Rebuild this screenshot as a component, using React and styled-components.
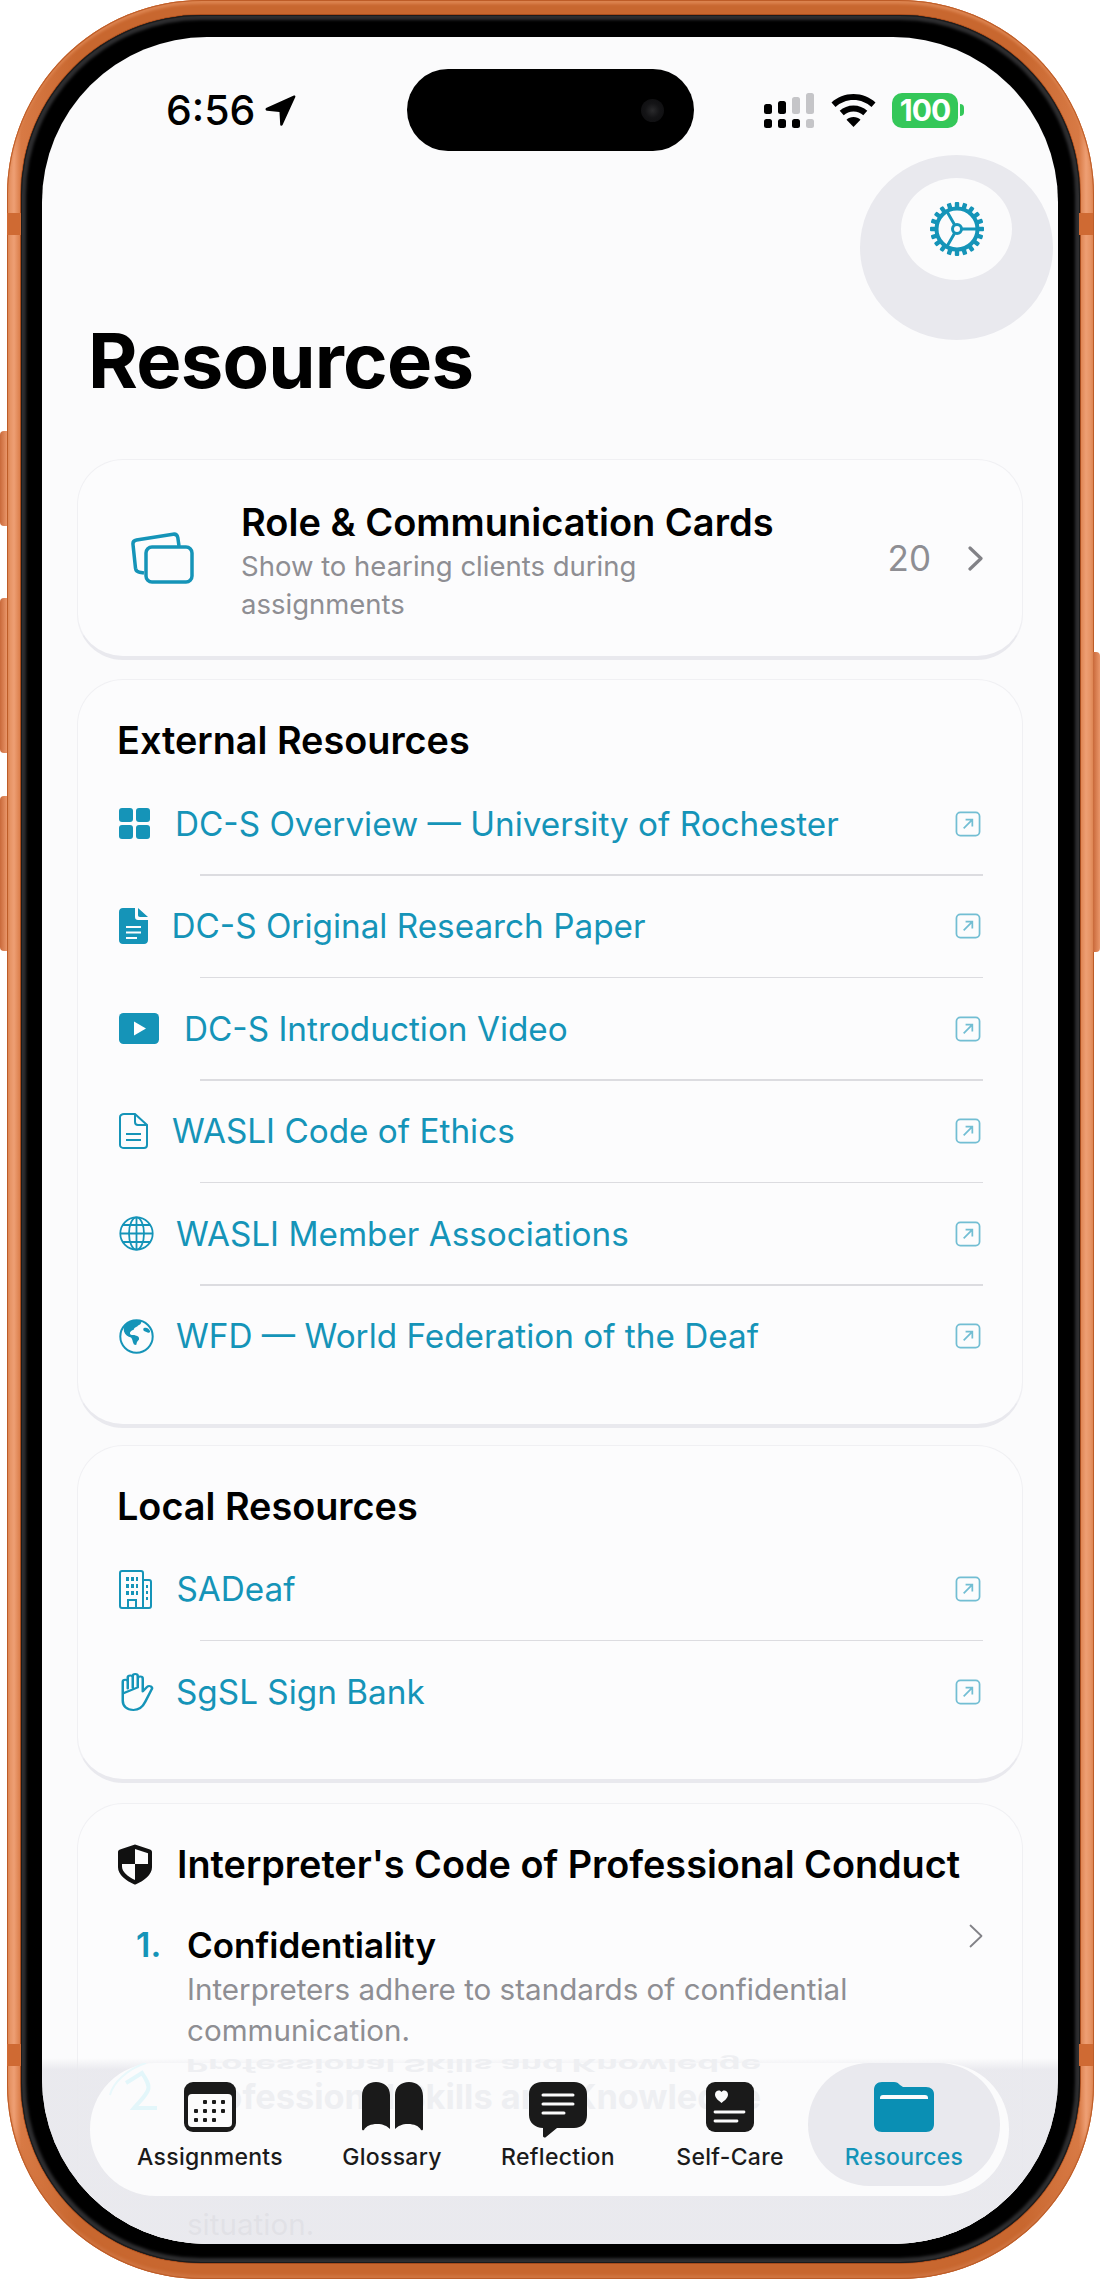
import styled, { createGlobalStyle } from 'styled-components';

const TEAL = '#1594b8';
const INK = '#1a1a1a';

const GlobalStyle = createGlobalStyle`
  html, body {
    background: #fff;
    height: 2279px;
    margin: 0;
    overflow: hidden;
    width: 1100px;
  }
  body {
    font-family: 'Inter', 'Liberation Sans', sans-serif;
  }
`;

const Phone = styled.div`
  background: linear-gradient(90deg, #e08a58 0, #ee9f74 7px, #d87a45 14px, #c8672f 70px, #c8672f 1016px, #d87a45 1072px, #ee9f74 1079px, #e08a58 1087px);
  border-radius: 195px;
  box-shadow: inset 0 0 0 1px #bd5c27, inset 0 4px 3px #dc8450, inset 0 -4px 3px #cf7440;
  box-sizing: border-box;
  height: 2279px;
  margin-left: 7px;
  padding: 15px 14px 16px;
  position: relative;
  width: 1087px;
`;

const SideButton = styled.div`
  background: linear-gradient(90deg, #c9693a, #e9966a);
  border-radius: ${(props) => (props.$right ? '0 4px 4px 0' : '4px 0 0 4px')};
  height: ${(props) => props.$height}px;
  left: ${(props) => (props.$right ? '1086px' : '-7px')};
  position: absolute;
  top: ${(props) => props.$top}px;
  width: 7px;
`;

const Band = styled.div`
  background: #cf6a33;
  height: 22px;
  left: ${(props) => (props.$right ? '1072px' : '0')};
  position: absolute;
  top: ${(props) => props.$top}px;
  width: 14px;
`;

const Bezel = styled.div`
  background: #000;
  border-radius: 180px;
  box-shadow: 0 0 0 1px #a94c1c, inset 0 0 0 1px #1b1b1b, inset 0 0 3px 5px #2e2e30;
  box-sizing: border-box;
  height: 100%;
  padding: 22px 21px 19px;
`;

const Screen = styled.div`
  background: #fbfbfc;
  border-radius: 165px;
  height: 2207px;
  overflow: hidden;
  position: relative;
  width: 1016px;
`;

const Island = styled.div`
  align-items: center;
  background: #000;
  border-radius: 41px;
  box-sizing: border-box;
  display: flex;
  height: 82px;
  justify-content: flex-end;
  left: 365px;
  padding-right: 30px;
  position: absolute;
  top: 32px;
  width: 287px;
`;

const Lens = styled.div`
  background: radial-gradient(circle, #2a2a2c 0, #141416 45%, #0c0c0e 100%);
  border-radius: 50%;
  height: 23px;
  width: 23px;
`;

const StatusBar = styled.div`
  align-items: center;
  box-sizing: border-box;
  display: flex;
  height: 146px;
  justify-content: space-between;
  padding: 0 94px 0 124px;
`;

const TimeGroup = styled.div`
  align-items: center;
  display: flex;
  gap: 9px;
`;

const Time = styled.span`
  color: #000;
  font-size: 41px;
  font-weight: 500;
`;

const StatusIcons = styled.div`
  align-items: center;
  display: flex;
  gap: 16px;
`;

const Battery = styled.div`
  align-items: center;
  display: flex;
  gap: 2px;
`;

const BatteryBody = styled.div`
  background: #34c759;
  border-radius: 10px;
  color: #fff;
  font-size: 30px;
  font-weight: 700;
  height: 35px;
  letter-spacing: -1px;
  line-height: 35px;
  text-align: center;
  width: 66px;
`;

const BatteryCap = styled.div`
  background: #34c759;
  border-radius: 0 4px 4px 0;
  height: 12px;
  width: 4px;
`;

const GearHalo = styled.div`
  background: #e9e9ee;
  border-radius: 50%;
  height: 185px;
  position: absolute;
  right: 5px;
  top: 118px;
  width: 193px;
`;

const GearDisc = styled.div`
  align-items: center;
  background: #fbfbfc;
  border-radius: 50%;
  display: flex;
  height: 102px;
  justify-content: center;
  margin: 23px 0 0 41px;
  width: 111px;
`;

const PageTitle = styled.h1`
  color: #000;
  font-size: 76px;
  font-weight: 700;
  letter-spacing: -0.8px;
  line-height: 92px;
  margin: 131px 0 53px 46px;
`;

const Cards = styled.div`
  display: flex;
  flex-direction: column;
  padding: 0 35px;
`;

const Card = styled.section`
  background: #fcfcfd;
  border: 1.5px solid #f0f0f3;
  border-bottom: 4px solid #e9e9ee;
  border-radius: 46px;
  box-sizing: border-box;
  margin-bottom: ${(props) => props.$gap}px;
  padding: 38px 39px 37px 41px;
`;

const RoleCard = styled(Card)`
  align-items: center;
  display: flex;
  height: 201px;
  padding: 0 39px 0 53px;
`;

const RoleText = styled.div`
  margin-left: 47px;
  margin-top: 5px;
  width: 560px;
`;

const RoleTitle = styled.div`
  color: #000;
  font-size: 38px;
  font-weight: 600;
  line-height: 46px;
`;

const RoleSub = styled.div`
  color: #8e8e93;
  font-size: 27.500px;
  line-height: 38px;
  margin-top: 2px;
  max-width: 480px;
`;

const Count = styled.span`
  color: #8e8e93;
  font-size: 35px;
  margin-left: auto;
  margin-right: 37px;
`;

const SectionTitle = styled.h2`
  align-items: center;
  color: #000;
  display: flex;
  font-size: 37.800px;
  font-weight: 600;
  gap: 24px;
  line-height: 44px;
  margin: 0 0 11px -2px;
  white-space: nowrap;
`;

const LinkRow = styled.div`
  align-items: center;
  display: flex;
  gap: 25px;
  height: 101px;
`;

const LinkLabel = styled.span`
  color: ${TEAL};
  flex: 1;
  font-size: 33.300px;
`;

const Divider = styled.div`
  background: #dcdce0;
  height: 1.5px;
  margin-left: 81px;
`;

const RowIcon = styled.span`
  color: ${TEAL};
  display: flex;
  flex-shrink: 0;
  margin-right: ${(props) => -(props.$trim || 0)}px;
`;

const ExternalWrap = styled.span`
  display: flex;
  margin-right: 2px;
`;

const ConductItem = styled.div`
  display: grid;
  grid-template-columns: 51px 1fr 20px;
  margin-top: ${(props) => props.$top}px;
  padding-left: 17px;
`;

const ItemNumber = styled.span`
  color: ${TEAL};
  font-size: 34px;
  font-weight: 600;
  line-height: 44px;
`;

const ItemTitle = styled.div`
  color: #000;
  font-size: 35px;
  font-weight: 600;
  line-height: 44px;
`;

const ItemDesc = styled.div`
  color: #8e8e93;
  font-size: 29.600px;
  line-height: 41px;
  margin-top: ${(props) => props.$top || 0}px;
  white-space: nowrap;
`;

const ItemChevron = styled.span`
  display: flex;
  justify-content: flex-end;
  margin-top: 1px;
`;

const BottomFade = styled.div`
  background: linear-gradient(180deg, rgba(232, 232, 237, 0) 0, rgba(232, 232, 237, 0.92) 12px);
  bottom: 0;
  height: 186px;
  left: 0;
  position: absolute;
  right: 0;
`;

const TabBar = styled.nav`
  background: #fbfbfc;
  border-radius: 66px;
  bottom: 48px;
  box-sizing: border-box;
  display: grid;
  grid-template-columns: 232px 132px 200px 144px 198px;
  height: 133px;
  left: 48px;
  padding-left: 4px;
  position: absolute;
  width: 919px;
`;

const GhostTitle = styled.div`
  color: #eeeff2;
  font-size: 34.300px;
  font-weight: 700;
  left: 96px;
  line-height: 44px;
  position: absolute;
  top: ${(props) => props.$top}px;
  transform: ${(props) => (props.$mirror ? 'scaleY(-0.5)' : 'none')};
  white-space: nowrap;
`;

const GhostNumber = styled.svg`
  left: 15px;
  position: absolute;
  top: 0;
`;

const Tab = styled.div`
  align-items: center;
  background: ${(props) => (props.$active ? '#e9e9ee' : 'transparent')};
  border-radius: 62px;
  display: flex;
  flex-direction: column;
  height: 123px;
  margin-left: ${(props) => (props.$active ? '6px' : '0')};
  position: relative;
`;

const TabIcon = styled.div`
  align-items: flex-start;
  display: flex;
  height: 62px;
  justify-content: center;
  margin-top: 19px;
`;

const TabLabel = styled.span`
  color: ${(props) => (props.$active ? TEAL : INK)};
  font-size: 23px;
  font-weight: 500;
  letter-spacing: 0.3px;
  line-height: 30px;
  margin-top: -2px;
`;

const LocationArrow = () => (
  <svg width="33" height="35" viewBox="0 0 32 34">
    <path d="M2 14.500 29 2.500c1-.4 1.800.4 1.400 1.400L18 31c-.6 1.200-2.200 1-2.300-.4l-.7-12.200L3 17.300c-1.600-.2-2-2-1-2.800z" fill="#000" />
  </svg>
);

const SignalDots = () => (
  <svg width="51" height="35" viewBox="0 0 51 35">
    <rect x="0" y="11" width="8" height="10" rx="2.500" fill="#000" />
    <rect x="14" y="8" width="8" height="13" rx="2.500" fill="#000" />
    <rect x="28" y="4" width="8" height="17" rx="2.500" fill="#c5c5c8" />
    <rect x="42" y="0" width="8" height="21" rx="2.500" fill="#c5c5c8" />
    <rect x="0" y="26" width="8" height="9" rx="2.500" fill="#000" />
    <rect x="14" y="26" width="8" height="9" rx="2.500" fill="#000" />
    <rect x="28" y="26" width="8" height="9" rx="2.500" fill="#000" />
    <rect x="42" y="26" width="8" height="9" rx="2.500" fill="#c5c5c8" />
  </svg>
);

const WifiIcon = () => (
  <svg width="45" height="33" viewBox="0 0 45 33">
    <path d="M22.500 0C14 0 6.300 3.200.5 8.500l4 4.500C9.200 8.700 15.500 6 22.500 6s13.300 2.700 18 7l4-4.500C38.700 3.200 31 0 22.500 0z" fill="#000" />
    <path d="M22.500 11.500c-5.300 0-10.100 2-13.800 5.300l4 4.500c2.600-2.300 6-3.800 9.800-3.800s7.200 1.500 9.800 3.800l4-4.500c-3.700-3.300-8.500-5.300-13.800-5.300z" fill="#000" />
    <path d="M22.500 23c-2.700 0-5.200 1-7 2.700l7 7.300 7-7.300c-1.800-1.700-4.300-2.700-7-2.700z" fill="#000" />
  </svg>
);

const GEAR_TEETH = Array.from({ length: 20 }, (_, i) => i * 18);

const GearIcon = () => (
  <svg width="56" height="56" viewBox="0 0 56 56">
    {GEAR_TEETH.map((angle) => (
      <rect key={angle} x="25.800" y="1" width="4.400" height="7" rx="1" fill={TEAL} transform={`rotate(${angle} 28 28)`} />
    ))}
    <circle cx="28" cy="28" r="20.500" fill="none" stroke={TEAL} strokeWidth="4" />
    <circle cx="28" cy="28" r="4.500" fill="none" stroke={TEAL} strokeWidth="3" />
    <path d="M32.500 28H48M25.700 24 17.800 10.300M25.700 32 17.800 45.700" fill="none" stroke={TEAL} strokeWidth="3" />
  </svg>
);

const CardsIcon = () => (
  <svg width="63" height="52" viewBox="0 0 63 52" fill="none" stroke={TEAL} strokeWidth="3.500">
    <path d="M13 41 8.500 40.300c-2.400-.4-3.700-2-4-4L2 12.500c-.3-2.300 1-4 3.500-4.500L42 2.200c2.500-.4 4.300 1 4.800 3.300L48 14" />
    <rect x="15" y="15" width="46" height="35" rx="6" />
  </svg>
);

const Chevron = ({ size = 'bold' }) =>
  size === 'bold' ? (
    <svg width="15" height="25" viewBox="0 0 15 25" fill="none" stroke="#828287" strokeWidth="3.200" strokeLinecap="round" strokeLinejoin="round">
      <path d="M2 2l11 10.500L2 23" />
    </svg>
  ) : (
    <svg width="14" height="24" viewBox="0 0 14 24" fill="none" stroke="#828287" strokeWidth="1.800" strokeLinecap="round" strokeLinejoin="round">
      <path d="M1.500 1.500 12.500 12 1.500 22.500" />
    </svg>
  );

const ExternalIcon = () => (
  <ExternalWrap>
    <svg width="26" height="26" viewBox="0 0 27 27" fill="none" stroke={TEAL} strokeOpacity="0.6" strokeWidth="1.800">
      <rect x="1.500" y="1.500" width="24" height="24" rx="4" />
      <path d="M9 18 18 9M11 9h7v7" />
    </svg>
  </ExternalWrap>
);

const GridIcon = () => (
  <svg width="31" height="31" viewBox="0 0 31 31" fill={TEAL}>
    <rect width="14" height="14" rx="3" />
    <rect x="17" width="14" height="14" rx="3" />
    <rect y="17" width="14" height="14" rx="3" />
    <rect x="17" y="17" width="14" height="14" rx="3" />
  </svg>
);

const FilledDocIcon = () => (
  <svg width="29" height="36" viewBox="0 0 29 36">
    <path d="M4 0h12v9c0 2 1.200 3 3 3h10v20c0 2.400-1.600 4-4 4H4c-2.400 0-4-1.600-4-4V4c0-2.400 1.600-4 4-4zM19 0l10 9h-8c-1.400 0-2-.7-2-2z" fill={TEAL} />
    <path d="M7 19h15M7 24.500h15M7 30h11" stroke="#fcfcfd" strokeWidth="2" />
  </svg>
);

const PlayIcon = () => (
  <svg width="40" height="31" viewBox="0 0 40 31">
    <rect width="40" height="31" rx="4.500" fill={TEAL} />
    <path d="M15 8.500v14l12-7z" fill="#fff" />
  </svg>
);

const OutlineDocIcon = () => (
  <svg width="29" height="36" viewBox="0 0 29 36" fill="none" stroke={TEAL} strokeWidth="2">
    <path d="M5 1h11l12 11v20c0 1.800-1.200 3-3 3H5c-2 0-4-1.200-4-3V4c0-1.800 2-3 4-3z" />
    <path d="M16 1v8c0 2 1.200 3 3 3h9M7 21h15M7 27h15" />
  </svg>
);

const GlobeIcon = () => (
  <svg width="35" height="35" viewBox="0 0 35 35" fill="none" stroke={TEAL} strokeWidth="1.800">
    <circle cx="17.500" cy="17.500" r="16.200" />
    <ellipse cx="17.500" cy="17.500" rx="7.500" ry="16.200" />
    <path d="M17.500 1.300v32.400M1.300 17.500h32.400M4 9h27M4 26h27" />
  </svg>
);

const EarthIcon = () => (
  <svg width="35" height="35" viewBox="0 0 35 35">
    <circle cx="17.500" cy="17.500" r="16.200" fill="none" stroke={TEAL} strokeWidth="2" />
    <path d="M6 6c4-4 10-5.500 16-4 1 2-1 4-3 4.500-1 2-4 1.500-4 4-3 1-5 3-3.500 5 1.500 1 3.500 0 5 1 2.500.5 4 1.500 3.500 4-1.500 1.500-2.500 3-2.500 5-1 .8-2.500.5-3-1-1-2-1-4.500-2.500-6-3-1-6-2.500-7-6-.5-2.500 0-4.500 1-6.500z" fill={TEAL} />
    <path d="M25 9c3-1 5 1 6 3 .5 1.500-1 2-2.500 1.500L25 12c-1-1-1-2.500 0-3z" fill={TEAL} />
  </svg>
);

const BuildingIcon = () => (
  <svg width="33" height="39" viewBox="0 0 33 39" fill="none" stroke={TEAL} strokeWidth="2">
    <path d="M3 1h19c1.200 0 2 .8 2 2v35H3c-1.200 0-2-.8-2-2V3c0-1.200.8-2 2-2z" />
    <path d="M24 10h6c1.200 0 2 .8 2 2v24c0 1.200-.8 2-2 2h-6M9 38v-8h8v8" />
    <path d="M7 7h3v4H7zM12 7h3v4h-3zM17 7h2v4h-2zM7 14h3v4H7zM12 14h3v4h-3zM17 14h2v4h-2zM7 21h3v4H7zM12 21h3v4h-3zM17 21h2v4h-2zM27 15h2v3h-2zM27 21h2v3h-2zM27 27h2v3h-2z" fill={TEAL} stroke="none" />
  </svg>
);

// open hand, four fingers up with the thumb on the right
const HandIcon = () => (
  <svg width="35" height="38" viewBox="0 0 28 37" preserveAspectRatio="none" fill="none" stroke={TEAL} strokeWidth="2" strokeLinecap="round" strokeLinejoin="round">
    <path d="M3 20V8.500a2 2 0 0 1 4 0V15M7 14V4.500a2 2 0 0 1 4 0V14M11 14V3a2 2 0 0 1 4 0V14M15 14V5.500a2 2 0 0 1 4 0V18l3.500-4.500a2.200 2.200 0 0 1 3.600 2.500L21 28c-2 5-5 8-9.500 8C6 36 3 32 3 27v-7z" />
  </svg>
);

const ShieldIcon = () => (
  <svg width="36" height="42" viewBox="0 0 36 42">
    <path d="M18 1.500 33 6.500c1.300.4 2 1.300 2 2.700v15c0 7.500-8 13.500-16 17-.6.300-1.400.3-2 0-8-3.500-16-9.500-16-17v-15c0-1.400.7-2.300 2-2.700z" fill="#111" />
    <path d="M18 6 31 10.300V21H18zM18 21v16C11 33.500 5 29 5 23.500V21z" fill="#fbfbfc" />
  </svg>
);

const CalendarIcon = () => {
  const dots = [
    [21, 20], [30, 20], [39, 20],
    [12, 29], [21, 29], [30, 29], [39, 29],
    [12, 38], [21, 38], [30, 38],
  ];
  return (
    <svg width="52" height="50" viewBox="0 0 52 50">
      <rect width="52" height="50" rx="9" fill={INK} />
      <rect x="4" y="12" width="44" height="33" rx="4" fill="#fbfbfc" />
      {dots.map(([x, y]) => (
        <rect key={`${x}-${y}`} x={x - 2} y={y - 2} width="4" height="4" rx="1" fill={INK} />
      ))}
    </svg>
  );
};

const BookIcon = () => (
  <svg width="61" height="49" viewBox="0 0 61 49" fill={INK}>
    <path d="M0 47V14C0 5 6 0 14 0c8 0 14 5 14 13v34c-3-3-7-5-13-5-6 0-11 2-13 6-1 .5-2 .2-2-1z" />
    <path d="M61 47V14C61 5 55 0 47 0c-8 0-14 5-14 13v34c3-3 7-5 13-5 6 0 11 2 13 6 1 .5 2 .2 2-1z" />
  </svg>
);

const BubbleIcon = () => (
  <svg width="58" height="56" viewBox="0 0 58 56">
    <path d="M13 0h32c8 0 13 5 13 12v21c0 8-5 13-13 13H28L17 55c-1 1-3 .5-3-1v-8c-8-.5-14-5-14-13V12C0 5 5 0 13 0z" fill={INK} />
    <path d="M14 13h30M14 22h30M14 31h21" stroke="#fbfbfc" strokeWidth="3" strokeLinecap="round" />
  </svg>
);

const HeartCardIcon = () => (
  <svg width="48" height="50" viewBox="0 0 48 50">
    <rect width="48" height="50" rx="9" fill={INK} />
    <path d="M15.500 21c-3-2.500-6.500-5-6.500-8.500C9 10 11 8.500 12.800 8.500c1.200 0 2.200.6 2.700 1.600.5-1 1.500-1.600 2.700-1.600 1.800 0 3.800 1.500 3.800 4 0 3.500-3.500 6-6.500 8.500z" fill="#fbfbfc" />
    <path d="M9 30h29M9 39h22" stroke="#fbfbfc" strokeWidth="2.800" strokeLinecap="round" />
  </svg>
);

const FolderIcon = () => (
  <svg width="60" height="50" viewBox="0 0 60 50">
    <path d="M8 0h12c3 0 4 1 6 3l3 2h23c5 0 8 3 8 7v30c0 5-3 8-8 8H8c-5 0-8-3-8-8V8c0-5 3-8 8-8z" fill="#0a8fb4" />
    <path d="M6 16c0-2 1-3 3-3h42c2 0 3 1 3 3v1H6z" fill="#fbfbfc" />
  </svg>
);

const EXTERNAL_LINKS = [
  { label: 'DC-S Overview — University of Rochester', icon: <GridIcon /> },
  { label: 'DC-S Original Research Paper', icon: <FilledDocIcon />, trim: 1.500 },
  { label: 'DC-S Introduction Video', icon: <PlayIcon /> },
  { label: 'WASLI Code of Ethics', icon: <OutlineDocIcon />, trim: 1 },
  { label: 'WASLI Member Associations', icon: <GlobeIcon />, trim: 3 },
  { label: 'WFD — World Federation of the Deaf', icon: <EarthIcon />, trim: 3 },
];

const LOCAL_LINKS = [
  { label: 'SADeaf', icon: <BuildingIcon />, trim: 0.500 },
  { label: 'SgSL Sign Bank', icon: <HandIcon />, trim: 3 },
];

const TABS = [
  { label: 'Assignments', icon: <CalendarIcon /> },
  { label: 'Glossary', icon: <BookIcon /> },
  { label: 'Reflection', icon: <BubbleIcon /> },
  { label: 'Self-Care', icon: <HeartCardIcon /> },
  { label: 'Resources', icon: <FolderIcon />, active: true },
];

const LinkList = ({ links }) =>
  links.map((link, i) => (
    <div key={link.label}>
      <LinkRow>
        <RowIcon $trim={link.trim}>{link.icon}</RowIcon>
        <LinkLabel>{link.label}</LinkLabel>
        <ExternalIcon />
      </LinkRow>
      {i < links.length - 1 && <Divider />}
    </div>
  ));

const App = () => (
  <>
    <GlobalStyle />
    <Phone>
      <SideButton $top={431} $height={95} />
      <SideButton $top={598} $height={155} />
      <SideButton $top={796} $height={155} />
      <SideButton $right $top={652} $height={300} />
      <Band $top={213} />
      <Band $right $top={213} />
      <Band $top={2044} />
      <Band $right $top={2044} />
      <Bezel>
        <Screen>
          <StatusBar>
            <TimeGroup>
              <Time>6:56</Time>
              <LocationArrow />
            </TimeGroup>
            <StatusIcons>
              <SignalDots />
              <WifiIcon />
              <Battery>
                <BatteryBody>100</BatteryBody>
                <BatteryCap />
              </Battery>
            </StatusIcons>
          </StatusBar>
          <Island>
            <Lens />
          </Island>
          <GearHalo>
            <GearDisc>
              <GearIcon />
            </GearDisc>
          </GearHalo>

          <PageTitle>Resources</PageTitle>

          <Cards>
            <RoleCard $gap={19}>
              <CardsIcon />
              <RoleText>
                <RoleTitle>Role &amp; Communication Cards</RoleTitle>
                <RoleSub>Show to hearing clients during assignments</RoleSub>
              </RoleText>
              <Count>20</Count>
              <Chevron />
            </RoleCard>

            <Card $gap={17}>
              <SectionTitle>External Resources</SectionTitle>
              <LinkList links={EXTERNAL_LINKS} />
            </Card>

            <Card $gap={20}>
              <SectionTitle>Local Resources</SectionTitle>
              <LinkList links={LOCAL_LINKS} />
            </Card>

            <Card $gap={0}>
              <SectionTitle>
                <ShieldIcon />
                Interpreter's Code of Professional Conduct
              </SectionTitle>
              <ConductItem $top={37}>
                <ItemNumber>1.</ItemNumber>
                <div>
                  <ItemTitle>Confidentiality</ItemTitle>
                  <ItemDesc $top={2}>Interpreters adhere to standards of confidential</ItemDesc>
                  <ItemDesc>communication.</ItemDesc>
                </div>
                <ItemChevron>
                  <Chevron size="thin" />
                </ItemChevron>
              </ConductItem>
              <ConductItem $top={22}>
                <span />
                <ItemDesc $top={131}>situation.</ItemDesc>
              </ConductItem>
            </Card>
          </Cards>

          <BottomFade />

          <TabBar>
            <GhostTitle $mirror $top={-20}>Professional Skills and Knowledge</GhostTitle>
            <GhostTitle $top={12}>Professional Skills and Knowledge</GhostTitle>
            <GhostNumber width="70" height="60" viewBox="0 0 70 60" fill="none">
              <path d="M5 32C8 20 22 6 41 0" stroke="#e9f8fb" strokeWidth="2" />
              <path d="M21 20 37 10c4 6 8 12 6 17-2 6-9 12-14 18h23" stroke="#e3f6fa" strokeWidth="4" />
            </GhostNumber>
            {TABS.map((tab) => (
              <Tab key={tab.label} $active={tab.active}>
                <TabIcon>{tab.icon}</TabIcon>
                <TabLabel $active={tab.active}>{tab.label}</TabLabel>
              </Tab>
            ))}
          </TabBar>
        </Screen>
      </Bezel>
    </Phone>
  </>
);

export default App;
